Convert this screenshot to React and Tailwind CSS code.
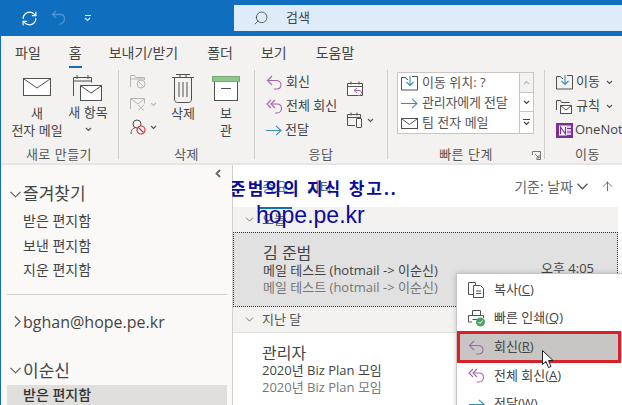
import React from 'react';
import { ChevronDown, ArrowUp, Search, RefreshCw } from 'lucide-react';

const FONT = "font-['Open_Sans','Noto_Sans_CJK_KR',sans-serif]";

const Svg = ({ w, h, className = '', children }) => (
  <svg width={w} height={h} viewBox={`0 0 ${w} ${h}`} fill="none" className={`shrink-0 ${className}`}>
    {children}
  </svg>
);

const Chev = ({ className = '' }) => (
  <svg width="7" height="5" viewBox="0 0 7 5" fill="none" className={`shrink-0 ${className}`}>
    <path d="M1 1l2.5 2.5L6 1" stroke="currentColor" strokeWidth="1.1" />
  </svg>
);

const Envelope = ({ w = 28, h = 18, color = '#505050' }) => (
  <Svg w={w} h={h}>
    <rect x=".5" y=".5" width={w - 1} height={h - 1} fill="#fff" stroke={color} />
    <path d={`M1 1l${w / 2 - 1} ${h / 2}L${w - 1} 1`} stroke={color} />
  </Svg>
);

const ReplyIcon = ({ color = '#a864b0' }) => (
  <Svg w={17} h={16}>
    <path d="M6 2L1.500 6.500 6 11" stroke={color} strokeWidth="1.1" />
    <path d="M2 6.500h8c3 0 5 1.800 5 4.200s-2 4.300-5 4.300H8" stroke={color} strokeWidth="1.1" />
  </Svg>
);

const ReplyAllIcon = ({ color = '#a864b0' }) => (
  <Svg w={17} h={16}>
    <path d="M5 2L1 6l4 4M9 2L5 6l4 4" stroke={color} strokeWidth="1.1" />
    <path d="M5.500 6H11c3 0 4.500 2 4.500 4.200S14 15 11 15H9" stroke={color} strokeWidth="1.1" />
  </Svg>
);

const ForwardIcon = ({ w = 16 }) => (
  <Svg w={w} h={11}>
    <path d={`M0 5.500h${w - 1}M${w - 6} .8l5 4.700-5 4.700`} stroke="#3a8fb5" strokeWidth="1.1" />
  </Svg>
);

const MoveIcon = () => (
  <Svg w={17} h={16}>
    <path d="M.5 15V2.500h4l1.500 2h1M11 1.500h5.500V15H.5" stroke="#505050" />
    <path d="M9 1v9M5.500 7L9 10.500 12.500 7" stroke="#3a8fb5" strokeWidth="1.1" />
  </Svg>
);

const CalBase = ({ children }) => (
  <Svg w={17} h={17}>
    <path d="M.5 3.500h15v12H.5zM.5 6.500h15M4 1.500v3M12 1.500v3" stroke="#505050" fill="#fff" />
    {children}
  </Svg>
);

const MenuItem = ({ icon, label, accel, active }) => (
  <div className={`flex h-[28.7px] items-center gap-[9px] pl-[11px] ${active ? 'bg-[#c8c6c4]' : ''}`}>
    <span className="flex w-[17px] justify-center">{icon}</span>
    <span className="text-[13px] text-[#444]">
      {label}(<span className="underline">{accel}</span>)
    </span>
  </div>
);

const SmallAction = ({ icon, label, chevron }) => (
  <div className="flex h-[24px] items-center gap-[3px]">
    {icon}
    <span className="whitespace-nowrap text-[13px] text-[#444]">{label}</span>
    {chevron && <Chev className="ml-[3px] text-[#555]" />}
  </div>
);

const GroupLabel = ({ children }) => (
  <div className="absolute inset-x-0 -bottom-[4px] text-center text-[13px] leading-[18px] tracking-[0.5px] text-[#555]">{children}</div>
);

const Ribbon = () => (
  <div className="flex h-[95px] bg-[#f3f2f1] text-[#444]">
    <div className="relative mt-[2px] mb-[4px] w-[119px] shrink-0 border-r border-[#d0cecc] pt-[8px]">
      <div className="flex">
        <div className="ml-[6px] flex w-[62px] flex-col items-center text-[13px] leading-[17px]">
          <div className="mb-[1px] h-[26px]"><Envelope /></div>
          <span>새</span>
          <span className="whitespace-nowrap">전자 메일</span>
        </div>
        <div className="-mt-[4px] flex w-[40px] flex-col items-center text-[13px] leading-[17px]">
          <div className="mb-[2px] h-[28px]">
            <Svg w={30} h={28}>
              <path d="M.5 22V3.500h18v5M.5 7h18M4 1v4M15 1v4" stroke="#505050" />
              <rect x="7.500" y="11.500" width="21" height="15" fill="#fff" stroke="#505050" />
              <path d="M8 12l10 7 10-7" stroke="#505050" />
            </Svg>
          </div>
          <span className="whitespace-nowrap">새 항목</span>
          <Chev className="mt-[6px] text-[#555]" />
        </div>
      </div>
      <GroupLabel>새로 만들기</GroupLabel>
    </div>

    <div className="relative mt-[2px] mb-[4px] w-[136px] shrink-0 border-r border-[#d0cecc] pt-[4px]">
      <div className="flex">
        <div className="ml-[11px] flex w-[33px] flex-col gap-[8px] text-[#bbb]">
          <Svg w={17} h={15}>
            <path d="M.5 13V1.500h4l1 2h9V6M.5 5h14" stroke="#b5b5b5" />
            <circle cx="11" cy="10" r="4" stroke="#b5b5b5" />
            <path d="M8.500 7.500l5 5" stroke="#b5b5b5" />
          </Svg>
          <div className="flex items-center gap-[3px]">
            <Svg w={17} h={14}>
              <path d="M.5 12V1.500h14v5M1 2l7 5 6-5" stroke="#b5b5b5" />
              <path d="M8 8l6 5.500M14 8l-6 5.500" stroke="#b5b5b5" />
            </Svg>
            <Chev className="text-[#bbb]" />
          </div>
          <div className="flex items-center gap-[3px]">
            <Svg w={17} h={16}>
              <circle cx="7" cy="5" r="4" stroke="#505050" />
              <path d="M1 15c0-4 2-6 4-6" stroke="#505050" />
              <circle cx="11" cy="11" r="4" fill="#fff" stroke="#d13438" strokeWidth="1.2" />
              <path d="M8.500 8.500l5 5" stroke="#d13438" strokeWidth="1.2" />
            </Svg>
            <Chev className="text-[#555]" />
          </div>
        </div>
        <div className="flex w-[40px] flex-col items-center text-[13px] leading-[17px]">
          <div className="mb-[1px] h-[30px]">
            <Svg w={22} h={29}>
              <path d="M4 .5h14M0 3.500h22M2.500 4v21c0 2 1 3.500 3 3.500h11c2 0 3-1.500 3-3.500V4M7 8v15M11 8v15M15 8v15M8 3V.5M14 3V.5" stroke="#505050" />
            </Svg>
          </div>
          <span>삭제</span>
        </div>
        <div className="ml-[3px] flex w-[40px] flex-col items-center text-[13px] leading-[17px]">
          <div className="mb-[2px] mt-[2px] h-[27px]">
            <Svg w={28} h={25}>
              <rect x="2.500" y="5.500" width="23" height="19" fill="#fff" stroke="#505050" />
              <rect x=".5" y=".5" width="27" height="5" fill="#8cc68a" stroke="#7aa878" />
              <path d="M9 12.500h10" stroke="#505050" />
            </Svg>
          </div>
          <span>보</span>
          <span>관</span>
        </div>
      </div>
      <GroupLabel>삭제</GroupLabel>
    </div>

    <div className="relative mt-[2px] mb-[4px] w-[133px] shrink-0 border-r border-[#d0cecc]">
      <div className="flex">
        <div className="ml-[11px] flex w-[81px] flex-col">
          <SmallAction icon={<ReplyIcon />} label="회신" />
          <SmallAction icon={<ReplyAllIcon />} label="전체 회신" />
          <SmallAction icon={<ForwardIcon />} label="전달" />
        </div>
        <div className="flex flex-col gap-[15px] pt-[10px]">
          <CalBase>
            <path d="M10 8L7 10.500 10 13M7.500 10.500H12c1.500 0 2.500 1 2.500 2.300S13.500 15.500 12 15.500h-1" stroke="#a864b0" strokeWidth="1" />
          </CalBase>
          <div className="flex items-center gap-[3px]">
            <Svg w={17} h={16}>
              <path d="M8 13.500H.5v-11h13V6M.5 5.500h13M4 .5v3M10 .5v3" stroke="#505050" />
              <rect x="9.500" y="6.500" width="5" height="9" rx=".5" fill="#fff" stroke="#505050" />
            </Svg>
            <Chev className="text-[#555]" />
          </div>
        </div>
      </div>
      <GroupLabel>응답</GroupLabel>
    </div>

    <div className="relative mt-[2px] mb-[4px] w-[157px] shrink-0 border-r border-[#d0cecc] pl-[9px] pt-[2px]">
      <div className="flex h-[62px] w-[137px] border border-[#c8c6c4] bg-white">
        <div className="flex w-[121px] flex-col pl-[3px] text-[13px] text-[#555]">
          <div className="flex h-[20px] items-center gap-[4px]"><MoveIcon /><span>이동 위치: ?</span></div>
          <div className="flex h-[20px] items-center gap-[4px]"><ForwardIcon w={17} /><span className="whitespace-nowrap tracking-[-0.2px]">관리자에게 전달</span></div>
          <div className="flex h-[20px] items-center gap-[4px]"><Envelope w={17} h={11} /><span>팀 전자 메일</span></div>
        </div>
        <div className="flex flex-1 flex-col border-l border-[#c8c6c4] text-[#444]">
          <div className="flex h-[20px] items-center justify-center border-b border-[#c8c6c4] bg-[#f3f2f1] text-[#bbb]"><Chev className="rotate-180" /></div>
          <div className="flex h-[19px] items-center justify-center border-b border-[#c8c6c4]"><Chev /></div>
          <div className="flex flex-1 flex-col items-center justify-center">
            <div className="mb-[1px] h-px w-[7px] bg-[#444]" />
            <Chev />
          </div>
        </div>
      </div>
      <GroupLabel>빠른 단계</GroupLabel>
      <div className="absolute -bottom-[1px] right-[3px]">
        <Svg w={9} h={9}>
          <path d="M.5 4V.5H8.500V8.500H4.500M3 3l4 4M4 7h3V4" stroke="#666" strokeWidth=".9" />
        </Svg>
      </div>
    </div>

    <div className="relative mt-[2px] mb-[4px] flex-1 pl-[11px]">
      <div className="flex flex-col">
        <SmallAction icon={<MoveIcon />} label="이동" chevron />
        <SmallAction
          icon={
            <Svg w={17} h={16}>
              <path d="M.5 12V2.500h4l1 2h8" stroke="#505050" />
              <rect x="4.500" y="7.500" width="11" height="8" fill="#fff" stroke="#505050" />
              <path d="M5 8l5 4 5-4" stroke="#505050" />
            </Svg>
          }
          label="규칙"
          chevron
        />
        <div className="flex h-[24px] items-center gap-[2px]">
          <Svg w={17} h={15}>
            <rect x="0" y="0" width="17" height="15" fill="#7b2f96" />
            <rect x="3" y="2.500" width="8" height="10" fill="#fff" />
            <rect x="11" y="2.500" width="4" height="2.500" fill="#e3c7ec" />
            <rect x="11" y="6" width="4" height="2.500" fill="#e3c7ec" />
            <rect x="11" y="9.500" width="4" height="2.500" fill="#e3c7ec" />
            <path d="M4.500 11V4l5 7V4" stroke="#7b2f96" strokeWidth="1.200" />
          </Svg>
          <span className="whitespace-nowrap text-[13px] text-[#444]">OneNote</span>
        </div>
      </div>
      <GroupLabel>이동</GroupLabel>
    </div>
  </div>
);

const FolderHeader = ({ label, open = true, className = '', textClass = 'text-[17px]' }) => (
  <div className={`flex items-center text-[#444] ${className}`}>
    <span className="flex w-[23px] justify-end pr-[2px]">
      {open ? (
        <Svg w={11} h={7}><path d="M.5.8l5 5 5-5" stroke="#555" strokeWidth="1.1" /></Svg>
      ) : (
        <Svg w={7} h={11}><path d="M1 .5l5 5-5 5" stroke="#555" strokeWidth="1.2" /></Svg>
      )}
    </span>
    <span className={`${textClass} leading-[22px]`}>{label}</span>
  </div>
);

const Sidebar = () => (
  <div className="relative w-[232px] shrink-0 bg-[#faf9f8] text-[#444]">
    <Svg w={6} h={9} className="absolute left-[215px] top-[4px]">
      <path d="M5 1L1.500 4.500 5 8" stroke="#666" strokeWidth="1.800" />
    </Svg>
    <div className="pt-[18px]">
      <FolderHeader label="즐겨찾기" />
      <div className="mt-[4px] flex flex-col pl-[23px] text-[14px] leading-[24.500px]">
        <span>받은 편지함</span>
        <span>보낸 편지함</span>
        <span>지운 편지함</span>
      </div>
    </div>
    <div className="ml-[7px] mr-[5px] mt-[11px] h-px bg-[#d2d0ce]" />
    <FolderHeader label="bghan@hope.pe.kr" open={false} className="mt-[16px]" textClass="text-[16px]" />
    <FolderHeader label="이순신" className="mt-[27px]" />
    <div className="ml-[7px] mr-[5px] mt-[3px] h-[22px] bg-[#e1dfdd] pl-[16px] text-[14px] font-medium leading-[20px] text-[#333]">받은 편지함</div>
  </div>
);

const MailRow = ({ sender, subject, time, selected }) => (
  <div className={`relative h-[75px] pl-[29px] pt-[9px] ${selected ? 'border border-dotted border-[#333] bg-[#e1e1e1]' : ''}`}>
    <div className="text-[16px] leading-[22px] text-[#444]">{sender}</div>
    <div className="-mt-[2px] whitespace-nowrap text-[13px] leading-[17px] text-[#444]">{subject}</div>
    <div className="whitespace-nowrap text-[13px] leading-[17px] text-[#777]">{subject}</div>
    {time && <div className="absolute right-[23px] top-[27px] text-[13px] leading-[16px] text-[#444]">{time}</div>}
  </div>
);

const MailList = () => (
  <div className="relative min-w-0 flex-1 border-l border-[#d2d0ce] bg-white pr-[4px]">
    <div className="flex h-[42px] items-center pl-[29px] text-[14px]">
      <span className="relative text-[#2b88a8]">
        중요
        <span className="absolute -bottom-[12px] -left-[4px] -right-[4px] h-[2px] bg-[#106ebe]" />
      </span>
      <span className="ml-[19px] text-[#666]">기타</span>
      <span className="ml-auto text-[#666]">기준: 날짜</span>
      <Svg w={11} h={7} className="ml-[4px]"><path d="M.5.8l5 5 5-5" stroke="#555" strokeWidth="1.3" /></Svg>
      <ArrowUp size={15} strokeWidth={1.200} className="ml-[12px] mr-[3px] text-[#444]" />
    </div>
    <div className="flex h-[25px] items-center bg-[#f3f2f1] pl-[10px] text-[13px] text-[#555]">
      <ChevronDown size={13} strokeWidth={1.4} />
      <span className="ml-[6px]">오늘</span>
    </div>
    <MailRow selected sender="김 준범" subject="메일 테스트 (hotmail -> 이순신)" time="오후 4:05" />
    <div className="flex h-[26px] items-center border-b border-[#e1dfdd] bg-[#f3f2f1] pl-[10px] text-[13px] text-[#555]">
      <ChevronDown size={13} strokeWidth={1.4} />
      <span className="ml-[6px]">지난 달</span>
    </div>
    <MailRow sender="관리자" subject="2020년 Biz Plan 모임" />
  </div>
);

const ContextMenu = () => (
  <div className="absolute left-[456px] top-[273px] h-[140px] w-[170px] border border-[#c8c6c4] bg-white pt-[1px] shadow-[0_0_5px_rgba(0,0,0,0.2)]">
    <MenuItem
      label="복사"
      accel="C"
      icon={
        <Svg w={17} h={17}>
          <path d="M5 13.500H.5V1.500h7v3" stroke="#505050" />
          <path d="M5.500 4.500h7l3 3v9h-10z" fill="#fff" stroke="#505050" />
          <path d="M8 10h5M8 12.500h5" stroke="#505050" />
        </Svg>
      }
    />
    <MenuItem
      label="빠른 인쇄"
      accel="Q"
      icon={
        <Svg w={18} h={17}>
          <path d="M4.500 5V.5h8V5M4 12H.5V5.500h15V8M4.500 9.500H10" stroke="#505050" />
          <circle cx="12.500" cy="12" r="4.500" fill="#4fa36a" />
          <path d="M10.500 12l1.500 1.500 2.500-3" stroke="#fff" />
        </Svg>
      }
    />
    <MenuItem active label="회신" accel="R" icon={<ReplyIcon />} />
    <MenuItem label="전체 회신" accel="A" icon={<ReplyAllIcon />} />
    <MenuItem label="전달" accel="W" icon={<ForwardIcon />} />
  </div>
);

export default function App() {
  return (
    <div className={`relative h-[405px] w-[622px] overflow-hidden bg-white ${FONT}`}>
      <div className="flex h-[36px] items-center bg-[#106ebe] pl-[21px]">
        <RefreshCw size={17} strokeWidth={1.6} className="text-white" />
        <svg width="16" height="16" viewBox="0 0 16 16" fill="none" className="ml-[13px] text-[#4c93d1]">
          <path d="M5 1L1.500 4.500 5 8M2 4.500h7.500c2.500 0 4 1.800 4 4.200s-2 4.800-5 5.800" stroke="currentColor" strokeWidth="1.300" />
        </svg>
        <div className="ml-[17px] flex flex-col items-center gap-[1px] text-white">
          <div className="h-px w-[6px] bg-[#deecf9]" />
          <Chev className="text-[#deecf9]" />
        </div>
        <div className="ml-[143px] flex h-[26px] flex-1 items-center bg-[#deecf9] pl-[19px] text-[13px] text-[#444]">
          <Search size={16} strokeWidth={1.2} className="-scale-x-100 text-[#444]" />
          <span className="ml-[17px]">검색</span>
        </div>
      </div>

      <div className="flex h-[32px] items-center bg-[#f3f2f1] pl-[15px] text-[14px] text-[#444]">
        <span>파일</span>
        <span className="relative ml-[28px]">
          홈
          <span className="absolute -bottom-[5px] left-0 right-0 h-[2px] bg-[#106ebe]" />
        </span>
        <span className="ml-[27px]">보내기/받기</span>
        <span className="ml-[29px]">폴더</span>
        <span className="ml-[28px]">보기</span>
        <span className="ml-[29px]">도움말</span>
      </div>

      <Ribbon />
      <div className="h-[2px] bg-[#e6e5e4]" />

      <div className="flex h-[240px]">
        <Sidebar />
        <MailList />
      </div>

      <div className="absolute left-0 top-[36px] h-[369px] w-px bg-[#106ebe]" />

      <div className="pointer-events-none absolute left-[232px] top-[165px] h-[70px] w-[190px] overflow-hidden">
        <div className="absolute -left-[2px] top-[13px] whitespace-nowrap text-[17px] font-bold leading-[22px] tracking-[2px] text-[#0a0a9c]">준범의의 지식 창고..</div>
        <div className="absolute left-[24px] top-[37px] font-['Liberation_Sans',sans-serif] text-[23px] leading-[26px] text-[#0a0a9c]">hope.pe.kr</div>
      </div>

      <ContextMenu />
      <div className="pointer-events-none absolute left-[457px] top-[331px] h-[32px] w-[164px] border-[3px] border-[#d9202a]" />

      <svg width="12" height="18" viewBox="0 0 12 18" className="absolute left-[542px] top-[350px]">
        <path d="M.5.500v14l3.500-3 2.500 6 2.500-1-2.500-6h4.500z" fill="#fff" stroke="#222" strokeWidth="1" />
      </svg>
    </div>
  );
}
